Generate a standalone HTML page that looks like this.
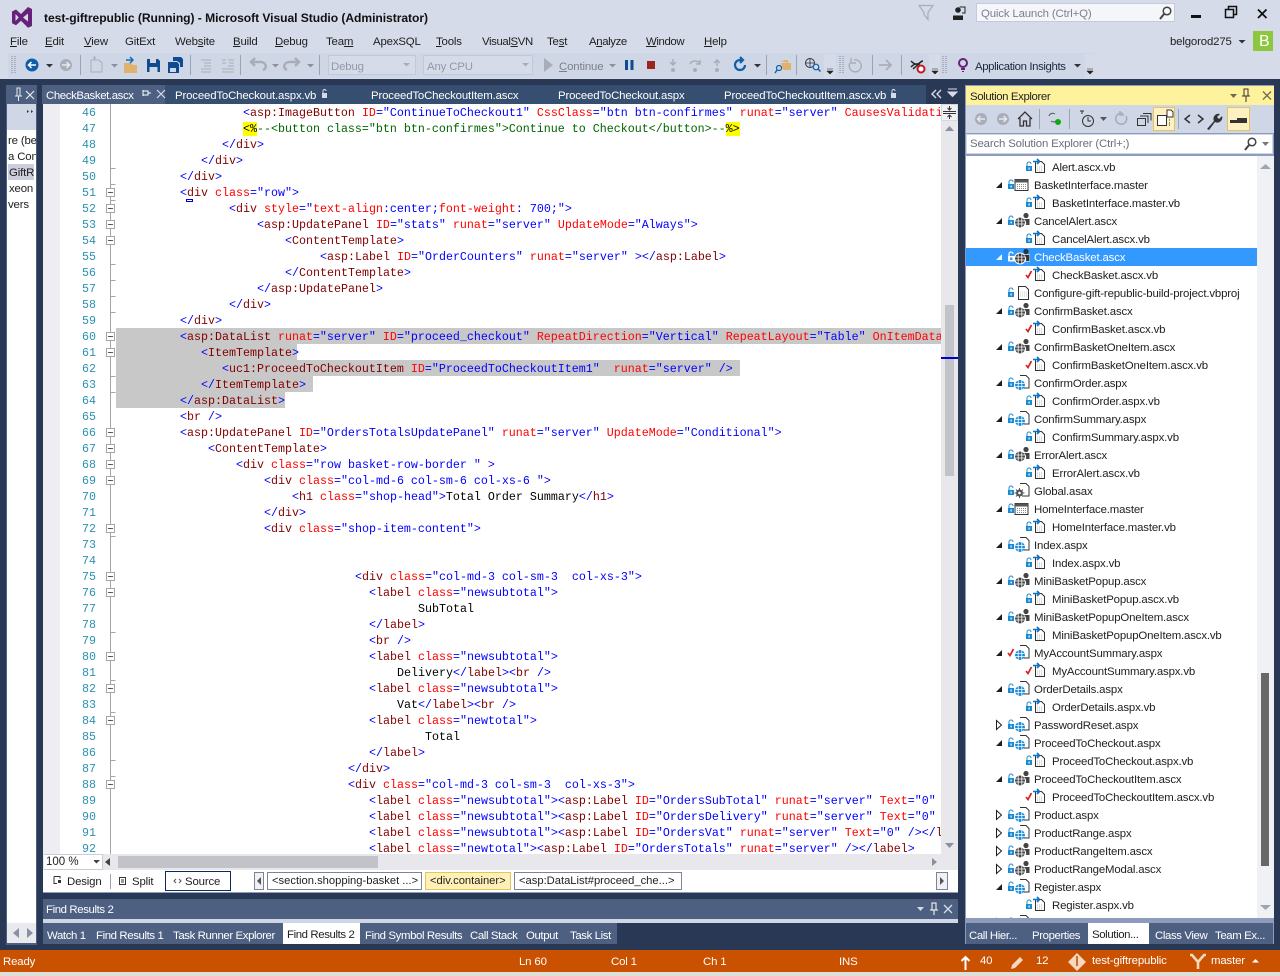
<!DOCTYPE html>
<html><head><meta charset="utf-8"><title>test-giftrepublic - Microsoft Visual Studio</title>
<style>
*{box-sizing:border-box}
html,body{margin:0;padding:0}
body{width:1280px;height:976px;overflow:hidden;position:relative;background:#293955;font:11.4px/16px "Liberation Sans",sans-serif;color:#1e1e1e}
.a{position:absolute}
.t{position:absolute;white-space:nowrap;letter-spacing:-.15px;margin-top:1px}
.n{letter-spacing:-.38px}
.w{color:#fff}
u{text-decoration:underline}
#code{position:absolute;left:43px;top:104px;width:898px;height:750px;background:#fff;overflow:hidden}
#code .l{position:absolute;white-space:pre;margin-top:1px;font:11.667px/16px "Liberation Mono",monospace;color:#000}
#code b{font-weight:normal;color:#800000}
#code i{font-style:normal;color:#0000ff}
#code u{text-decoration:none;color:#ff0000}
#code em{font-style:normal;color:#006400}
#code mark{background:#ffff00;color:#000}
#code .s{position:absolute;left:73px;height:16px;background:#c8c8c8}
#nums{position:absolute;left:17px;top:1px;width:36px;text-align:right;white-space:pre;font:11.667px/16px "Liberation Mono",monospace;color:#2b91af}
#tree{position:absolute;left:966px;top:156px;width:291px;height:762px;overflow:hidden;background:#fff;padding-top:2px}
.r{position:relative;height:18px;color:#1e1e1e}
.r svg{position:absolute;top:0;width:24px;height:18px}
.r span{position:absolute;top:2px;white-space:nowrap;letter-spacing:-.15px}
.sel{background:#3399ff;color:#fff}
.ob{position:absolute;border:1px solid #7a8499;background:#fff;height:18px;top:872px;font:11.2px/16px "Liberation Sans",sans-serif;white-space:nowrap;padding-left:4px;color:#1e1e1e}
</style></head>
<body>
<svg width="0" height="0" style="position:absolute"><defs>
<symbol id="ll" viewBox="0 0 24 18"><path d="M2 8V6a2 2 0 0 1 4 0" fill="none" stroke="#1a8ad4" stroke-width="1"/><rect x="1" y="8" width="6" height="5" fill="#1a8ad4"/><rect x="3.500" y="9.500" width="1.200" height="2" fill="#fff"/></symbol>
<symbol id="ls" viewBox="0 0 24 18"><path d="M2 8V6a2 2 0 0 1 4 0" fill="none" stroke="#fff" stroke-width="1.200"/><rect x="1" y="8" width="6.500" height="5.500" fill="#fff"/><rect x="3" y="9.500" width="2.500" height="2.500" fill="#3399ff"/></symbol>
<symbol id="cc" viewBox="0 0 24 18"><path d="M1 9l2 2.500L6.500 5" fill="none" stroke="#d81e1e" stroke-width="1.700"/></symbol>
<symbol id="ee" viewBox="0 0 24 18"><path d="M1 12h6V6z" fill="#1e1e1e"/></symbol>
<symbol id="es" viewBox="0 0 24 18"><path d="M1 12h6V6z" fill="#eaf4ff"/></symbol>
<symbol id="xx" viewBox="0 0 24 18"><path d="M1.500 4.500v9l5-4.500z" fill="#fff" stroke="#1e1e1e"/></symbol>
<symbol id="ff" viewBox="0 0 24 18"><path d="M2.500 3.500h6l3 3v8h-9z" fill="#fff" stroke="#333"/><path d="M4 9h6M4 11h6M4 13h6" stroke="#bbb" stroke-dasharray="1 1"/><path d="M0 3.500h6M4 1l2.500 2.500L4 6" fill="none" stroke="#0e70c0" stroke-width="1.600"/></symbol>
<symbol id="pg" viewBox="0 0 24 18"><path d="M6 1.500h6l3 3v9.500H10" fill="#fff" stroke="#333"/><circle cx="6" cy="11" r="5" fill="#1a8ad4"/><path d="M1 9.500h10M1 12.500h10M4.200 6v10M7.800 6v10" stroke="#fff" stroke-width=".8"/></symbol>
<symbol id="uc" viewBox="0 0 24 18"><circle cx="6" cy="10.500" r="5" fill="#444"/><path d="M1 9h10M1 12h10M4.200 5.500v10M7.800 5.500v10" stroke="#fff" stroke-width=".8"/><circle cx="12" cy="3.500" r="2.600" fill="#444"/><path d="M10 7h5.500v6H12a6 6 0 0 0-2-6z" fill="#444"/></symbol>
<symbol id="us" viewBox="0 0 24 18"><rect x="9" y="6.500" width="7" height="7" fill="#fff"/><circle cx="6" cy="10.500" r="6" fill="#fff"/><circle cx="6" cy="10.500" r="5" fill="#333"/><path d="M1 9h10M1 12h10M4.200 5.500v10M7.800 5.500v10" stroke="#fff" stroke-width=".8"/><circle cx="12" cy="3.500" r="2.600" fill="#333"/><path d="M10 7h5.500v6H12a6 6 0 0 0-2-6z" fill="#333"/></symbol>
<symbol id="mm" viewBox="0 0 24 18"><rect x="1" y="3.500" width="13" height="11" fill="#fff" stroke="#333"/><rect x="1" y="3.500" width="13" height="3" fill="#555"/><path d="M3 8.500h9.500M3 10.500h9.500M3 12.500h9.500" stroke="#888" stroke-dasharray="1 1"/></symbol>
<symbol id="dc" viewBox="0 0 24 18"><path d="M2.500 2.500h7l3 3v10h-10z" fill="#fff" stroke="#333"/><path d="M4 8h7M4 10h7M4 12h7" stroke="#ccc" stroke-dasharray="1 1"/></symbol>
<symbol id="gl" viewBox="0 0 24 18"><path d="M6 1.500h6l3 3v9.500H9" fill="#fff" stroke="#333"/><circle cx="5.500" cy="11" r="3.500" fill="#555"/><path d="M5.500 6v10M.5 11h10M2 7.500l7 7M9 7.500l-7 7" stroke="#555"/><circle cx="5.500" cy="11" r="1.300" fill="#fff"/></symbol>
<symbol id="fb" viewBox="0 0 9 9"><rect x=".5" y=".5" width="8" height="8" fill="#fff" stroke="#a5a5a5"/><path d="M2 4.500h5" stroke="#555"/></symbol>
</defs></svg>

<!-- top chrome -->
<div class="a" style="left:0;top:0;width:1280px;height:79px;background:#d6dbe9"></div>
<div class="a" style="left:8px;top:53px;width:1087px;height:25px;background:#cfd6e5"></div>
<svg class="a" style="left:0;top:0" width="1280" height="105" viewBox="0 0 1280 105">
<path d="M12 11.500 16 9.500 21 14 28 7 32 9v17l-4 1.800-7-7-5 4.500-4-2zM15.500 14v7l3.200-3.500zM28 13.500l-5 4 5 4z" fill="#68217a" fill-rule="evenodd"/>
<path d="M919 5.500h14l-5 7v7l-4-5v-2z" fill="none" stroke="#a7adba" stroke-width="1.200"/>
<circle cx="958" cy="10" r="2.800" fill="#222"/><path d="M953 20v-4.500h10V20z" fill="#222"/><path d="M959.500 7h5.500v6h-3" fill="none" stroke="#222"/>
<rect x="976.500" y="3.500" width="198" height="18" fill="#f5f6fa" stroke="#c5cbdc"/>
<circle cx="1167" cy="11" r="3.800" fill="none" stroke="#444" stroke-width="1.500"/><path d="M1164 14l-4 5" stroke="#444" stroke-width="2"/>
<rect x="1191" y="15" width="10" height="3" fill="#111"/>
<path d="M1225.500 9.500h8v8h-8zM1228.500 9.500v-3h8v8h-3" fill="none" stroke="#111" stroke-width="1.500"/>
<path d="M1258 9.500l8.500 8.500M1266.500 9.500l-8.500 8.500" stroke="#111" stroke-width="1.800"/>
<path d="M1238.500 40h7l-3.500 3.500z" fill="#333"/>
<rect x="1253" y="31" width="20" height="20" fill="#8dc63f"/>
<path d="M12 56v18M15 56v18" stroke="#8d97ac" stroke-dasharray="1 1" stroke-width="1.200"/>
<circle cx="32" cy="65" r="6.500" fill="#0e5fa8"/><path d="M36 65h-7M31.500 62l-3 3 3 3" fill="none" stroke="#fff" stroke-width="1.500"/>
<path d="M46 64h7l-3.500 3.500z" fill="#333"/>
<circle cx="66" cy="65" r="6" fill="#a8adb8"/><path d="M62 65h7M66.500 62l3 3-3 3" fill="none" stroke="#e8eaf0" stroke-width="1.500"/>
<path d="M80.500 55v20M240.500 55v20M319.500 55v20M190.500 55v20M766.500 55v20M796.500 55v20M872.500 55v20M901.500 55v20" stroke="#9aa3b5"/>
<path d="M91 60h8l3 3v9H91z" fill="none" stroke="#a8adb8"/><path d="M93 58h3M94.500 56v4" stroke="#a8adb8"/>
<path d="M111 64h7l-3.500 3.500z" fill="#8b90a0"/>
<path d="M124 63h7l2 2h4v8h-13z" fill="#dfb36e"/><path d="M126 60h6M130 57l3 3-3 3" fill="none" stroke="#0e70c0" stroke-width="1.500"/>
<path d="M147 59h11l2 2v11h-13z" fill="#0e4b90"/><rect x="150" y="59" width="6" height="4" fill="#cfd6e5"/><rect x="149.500" y="67" width="8" height="5" fill="#cfd6e5"/>
<path d="M168 62h9l2 2v9h-11z" fill="#0e4b90"/><path d="M173 57h8l2 2v8h-3v-4l-3-2h-4z" fill="#0e4b90"/><rect x="170" y="68" width="6" height="4" fill="#cfd6e5"/>
<path d="M201 60h10M204 63h7M204 66h7M201 69h10M201 72h10" stroke="#a8adb8"/>
<path d="M222 60h4M222 63h4M228 60h6M229 63h5M228 66h6M222 69h12M222 72h12" stroke="#a8adb8"/>
<path d="M263 70c5-2 3-9-4-8h-7M255 58l-4 4 4 4" fill="none" stroke="#a8adb8" stroke-width="2.400"/>
<path d="M272 64h7l-3.500 3.500z" fill="#8b90a0"/>
<path d="M287 70c-5-2-3-9 4-8h7M295 58l4 4-4 4" fill="none" stroke="#a8adb8" stroke-width="2.400"/>
<path d="M307 64h7l-3.500 3.500z" fill="#8b90a0"/>
<rect x="328.500" y="55.500" width="87" height="19" fill="#d6dbe9" stroke="#c2c8d7"/><path d="M403 63h7l-3.500 3.500z" fill="#a8adb8"/>
<rect x="423.500" y="55.500" width="109" height="19" fill="#d6dbe9" stroke="#c2c8d7"/><path d="M522 63h7l-3.500 3.500z" fill="#a8adb8"/>
<path d="M544 58v14l9-7z" fill="#a8adb8"/>
<path d="M609 64h7l-3.500 3.500z" fill="#8b90a0"/>
<rect x="625" y="60" width="3" height="10" fill="#0e4b90"/><rect x="630.500" y="60" width="3" height="10" fill="#0e4b90"/>
<rect x="647" y="61" width="8" height="8" fill="#99271b"/>
<path d="M673 59v6M670 62l3 3 3-3" fill="none" stroke="#a8adb8" stroke-width="1.500"/><circle cx="673" cy="70" r="2" fill="#a8adb8"/>
<path d="M690 64c2-4 8-4 10 0M700 60v4h-4" fill="none" stroke="#a8adb8" stroke-width="1.500"/><circle cx="695" cy="70" r="2" fill="#a8adb8"/>
<path d="M717 66v-6M714 63l3-3 3 3" fill="none" stroke="#a8adb8" stroke-width="1.500"/><circle cx="717" cy="70" r="2" fill="#a8adb8"/>
<path d="M745 65a5 5 0 1 1-5-5h3M740 57l3 3-3 3" fill="none" stroke="#0e5fa8" stroke-width="2.200"/>
<path d="M754 64h7l-3.500 3.500z" fill="#333"/>
<path d="M780 61h3l1-1h4v3M781 63h10v7h-8z" fill="#dfb36e"/><circle cx="779" cy="68" r="2.500" fill="none" stroke="#0e5fa8" stroke-width="1.200"/><path d="M777 70l-2 3" stroke="#0e5fa8" stroke-width="1.400"/>
<circle cx="810" cy="63" r="4.500" fill="none" stroke="#333"/><path d="M805.500 63h9M810 58.500v9" stroke="#333" stroke-width=".8"/><circle cx="816" cy="67" r="2.800" fill="#d6dbe9" stroke="#0e5fa8" stroke-width="1.200"/><path d="M818 69l2.500 2.500" stroke="#0e5fa8" stroke-width="1.500"/>
<rect x="824" y="54" width="12" height="24" fill="#d6dbe9"/><path d="M827 69h6M827 71h6l-3 3z" fill="#222" stroke="#222" stroke-width=".6"/>
<path d="M840 56v18M843 56v18" stroke="#8d97ac" stroke-dasharray="1 1" stroke-width="1.200"/>
<path d="M854 60a6 6 0 1 1-4 3M851 58v5h5" fill="none" stroke="#a8adb8" stroke-width="1.400"/>
<path d="M879 65h12M886 60l5 5-5 5" fill="none" stroke="#a8adb8" stroke-width="1.800"/>
<path d="M911 61c3 3 4 3 6 3s4-3 6-3M911 67c3-3 4-3 6-3s4 3 6 3" fill="none" stroke="#222" stroke-width="1.400"/><path d="M913 69l9-8" stroke="#222" stroke-width="1.400"/><circle cx="921" cy="69" r="3.500" fill="#fff" stroke="#c8161d" stroke-width="2"/>
<rect x="929" y="54" width="11" height="24" fill="#d6dbe9"/><path d="M932 69h6M932 71h6l-3 3z" fill="#222" stroke="#222" stroke-width=".6"/>
<path d="M943 56v18M946 56v18" stroke="#8d97ac" stroke-dasharray="1 1" stroke-width="1.200"/>
<circle cx="963" cy="63" r="4" fill="none" stroke="#68217a" stroke-width="2"/><path d="M961 68h4v2h-4zM962 71h2v1h-2z" fill="#68217a"/>
<path d="M1074 64h7l-3.500 3.500z" fill="#333"/>
<rect x="1085" y="54" width="10" height="24" fill="#d6dbe9"/><path d="M1087 69h6M1087 71h6l-3 3z" fill="#222" stroke="#222" stroke-width=".6"/>
</svg>

<div class="t" style="left:44px;top:9px;font-weight:bold;font-size:12.1px;color:#111;letter-spacing:-.05px">test-giftrepublic (Running) - Microsoft Visual Studio (Administrator)</div>
<div class="t" style="left:981px;top:5px;color:#7b8090">Quick Launch (Ctrl+Q)</div>
<div class="t" style="left:1170px;top:33px">belgorod275</div>
<div class="t w" style="left:1259px;top:32px;font-size:16px;line-height:17px;color:#fff">B</div>
<div class="t" style="left:10px;top:33px"><u>F</u>ile</div>
<div class="t" style="left:45px;top:33px"><u>E</u>dit</div>
<div class="t" style="left:84px;top:33px"><u>V</u>iew</div>
<div class="t" style="left:125px;top:33px">GitExt</div>
<div class="t" style="left:175px;top:33px">Web<u>s</u>ite</div>
<div class="t" style="left:233px;top:33px"><u>B</u>uild</div>
<div class="t" style="left:275px;top:33px"><u>D</u>ebug</div>
<div class="t" style="left:326px;top:33px">Tea<u>m</u></div>
<div class="t" style="left:373px;top:33px">ApexSQL</div>
<div class="t" style="left:436px;top:33px"><u>T</u>ools</div>
<div class="t n" style="left:482px;top:33px">Visual<u>S</u>VN</div>
<div class="t" style="left:547px;top:33px">Te<u>s</u>t</div>
<div class="t n" style="left:589px;top:33px">A<u>n</u>alyze</div>
<div class="t n" style="left:646px;top:33px"><u>W</u>indow</div>
<div class="t" style="left:704px;top:33px"><u>H</u>elp</div>
<div class="t" style="left:331px;top:58px;color:#9298a6">Debug</div>
<div class="t" style="left:427px;top:58px;color:#9298a6">Any CPU</div>
<div class="t" style="left:559px;top:58px;color:#7b8090"><u>C</u>ontinue</div>
<div class="t n" style="left:975px;top:58px;color:#1b293e">Application Insights</div>

<!-- left panel -->
<div class="a" style="left:6px;top:85px;width:31px;height:860px;background:#4d6082"></div>
<div class="a" style="left:7px;top:104px;width:29px;height:839px;background:#fff"></div>
<div class="a" style="left:7px;top:104px;width:29px;height:26px;background:#cfd6e5"></div>
<svg class="a" style="left:6px;top:85px" width="31" height="36"><path d="M11 3v8h3v-8zM9 11h7M12.500 11v5" fill="none" stroke="#e8eaf0"/><path d="M20 6l8 8M28 6l-8 8" stroke="#e8eaf0" stroke-width="1.200"/><path d="M21 25v3l2-1.500zM25 25v3l2-1.500z" fill="#333"/></svg>
<div class="a" style="left:8px;top:164px;width:26px;height:16px;background:#cccedb"></div>
<div class="a" style="left:7px;top:132px;width:29px;height:80px;overflow:hidden">
<div class="t" style="left:1px;top:0">re (be</div>
<div class="t" style="left:1px;top:16px">a Con</div>
<div class="t" style="left:2px;top:32px;width:26px;overflow:hidden">GiftR</div>
<div class="t" style="left:2px;top:48px">xeon</div>
<div class="t" style="left:1px;top:64px">vers</div>
</div>
<div class="a" style="left:7px;top:923px;width:29px;height:20px;background:#e8eaf0"></div>
<svg class="a" style="left:7px;top:923px" width="29" height="20"><path d="M12 5v10l-6-5zM20 5v10l6-5z" fill="#8b90a0"/></svg>

<!-- tab strip -->
<div class="a" style="left:43px;top:85px;width:915px;height:19px;background:#364e6f"></div>
<div class="a" style="left:42px;top:85px;width:123px;height:19px;background:#4d6082"></div>
<div class="t w n" style="left:46px;top:87px">CheckBasket.ascx</div>
<div class="t w" style="left:175px;top:87px">ProceedToCheckout.aspx.vb</div>
<div class="t w" style="left:371px;top:87px">ProceedToCheckoutItem.ascx</div>
<div class="t w" style="left:558px;top:87px">ProceedToCheckout.aspx</div>
<div class="t w" style="left:724px;top:87px">ProceedToCheckoutItem.ascx.vb</div>
<svg class="a" style="left:0;top:85px" width="960" height="19" fill="none">
<path d="M143 6h5v4h-5zM148 8h3M143 5v6" stroke="#fff"/><path d="M157 5l8 8M165 5l-8 8" stroke="#d5dbe8" stroke-width="1.200"/>
<rect x="322" y="8" width="5" height="5" fill="#d5dbe8"/><path d="M323 8V6a1.500 1.500 0 0 1 3 0" stroke="#d5dbe8"/>
<rect x="891" y="8" width="5" height="5" fill="#d5dbe8"/><path d="M892 8V6a1.500 1.500 0 0 1 3 0" stroke="#d5dbe8"/>
<rect x="926" y="0" width="32" height="19" fill="#293955"/>
<path d="M936 5l-4 4 4 4M941 5l-4 4 4 4" stroke="#d5dbe8" stroke-width="1.400"/>
<path d="M948 4h9M948 7h9l-4.500 4.500z" fill="#d5dbe8" stroke="#d5dbe8"/>
</svg>

<!-- editor -->
<div id="code">
<div class="a" style="left:0;top:0;width:17px;height:750px;background:#eeeef2"></div>
<div class="s" style="top:224px;width:825px"></div>
<div class="s" style="top:240px;width:181px"></div>
<div class="s" style="top:256px;width:624px"></div>
<div class="s" style="top:272px;width:197px"></div>
<div class="s" style="top:288px;width:169px"></div>
<div id="nums">46
47
48
49
50
51
52
53
54
55
56
57
58
59
60
61
62
63
64
65
66
67
68
69
70
71
72
73
74
75
76
77
78
79
80
81
82
83
84
85
86
87
88
89
90
91
92</div>
<svg class="a" style="left:60px;top:0" width="15" height="750">
<path d="M7.500 0v750" stroke="#a5a5a5"/>
<path d="M7.500 64.500h5M7.500 80.500h5M7.500 96.500h5M7.500 192.500h5M7.500 176.500h5M7.500 208.500h5M7.500 160.500h5M7.500 272.500h5M7.500 288.500h5M7.500 432.500h5M7.500 528.500h5M7.500 576.500h5M7.500 608.500h5M7.500 656.500h5M7.500 672.500h5" stroke="#a5a5a5"/>
<use href="#fb" x="3" y="84" width="9" height="9"/><use href="#fb" x="3" y="100" width="9" height="9"/><use href="#fb" x="3" y="116" width="9" height="9"/><use href="#fb" x="3" y="132" width="9" height="9"/>
<use href="#fb" x="3" y="228" width="9" height="9"/><use href="#fb" x="3" y="244" width="9" height="9"/>
<use href="#fb" x="3" y="324" width="9" height="9"/><use href="#fb" x="3" y="340" width="9" height="9"/><use href="#fb" x="3" y="356" width="9" height="9"/><use href="#fb" x="3" y="372" width="9" height="9"/><use href="#fb" x="3" y="420" width="9" height="9"/>
<use href="#fb" x="3" y="468" width="9" height="9"/><use href="#fb" x="3" y="484" width="9" height="9"/><use href="#fb" x="3" y="548" width="9" height="9"/><use href="#fb" x="3" y="580" width="9" height="9"/><use href="#fb" x="3" y="612" width="9" height="9"/><use href="#fb" x="3" y="676" width="9" height="9"/>
</svg>
<div class="l" style="left:200px;top:0"><i>&lt;</i><b>asp:ImageButton</b> <u>ID</u><i>="ContinueToCheckout1"</i> <u>CssClass</u><i>="btn btn-confirmes"</i> <u>runat</u><i>="server"</i> <u>CausesValidati</u></div>
<div class="l" style="left:200px;top:16px"><mark>&lt;%</mark><em>--&lt;button class="btn btn-confirmes"&gt;Continue to Checkout&lt;/button&gt;--</em><mark>%&gt;</mark></div>
<div class="l" style="left:179px;top:32px"><i>&lt;/</i><b>div</b><i>&gt;</i></div>
<div class="l" style="left:158px;top:48px"><i>&lt;/</i><b>div</b><i>&gt;</i></div>
<div class="l" style="left:137px;top:64px"><i>&lt;/</i><b>div</b><i>&gt;</i></div>
<div class="l" style="left:137px;top:80px"><i>&lt;</i><b>div</b> <u>class</u><i>="row"&gt;</i></div>
<div class="a" style="left:143px;top:95px;width:7px;height:3px;border:1px solid #00c;border-top-width:1px"></div>
<div class="l" style="left:186px;top:96px"><i>&lt;</i><b>div</b> <u>style</u><i>="</i><u>text-align</u><i>:center;</i><u>font-weight</u><i>: 700;"&gt;</i></div>
<div class="l" style="left:214px;top:112px"><i>&lt;</i><b>asp:UpdatePanel</b> <u>ID</u><i>="stats"</i> <u>runat</u><i>="server"</i> <u>UpdateMode</u><i>="Always"&gt;</i></div>
<div class="l" style="left:242px;top:128px"><i>&lt;</i><b>ContentTemplate</b><i>&gt;</i></div>
<div class="l" style="left:277px;top:144px"><i>&lt;</i><b>asp:Label</b> <u>ID</u><i>="OrderCounters"</i> <u>runat</u><i>="server"</i> <i>&gt;&lt;/</i><b>asp:Label</b><i>&gt;</i></div>
<div class="l" style="left:242px;top:160px"><i>&lt;/</i><b>ContentTemplate</b><i>&gt;</i></div>
<div class="l" style="left:214px;top:176px"><i>&lt;/</i><b>asp:UpdatePanel</b><i>&gt;</i></div>
<div class="l" style="left:186px;top:192px"><i>&lt;/</i><b>div</b><i>&gt;</i></div>
<div class="l" style="left:137px;top:208px"><i>&lt;/</i><b>div</b><i>&gt;</i></div>
<div class="l" style="left:137px;top:224px"><i>&lt;</i><b>asp:DataList</b> <u>runat</u><i>="server"</i> <u>ID</u><i>="proceed_checkout"</i> <u>RepeatDirection</u><i>="Vertical"</i> <u>RepeatLayout</u><i>="Table"</i> <u>OnItemData</u></div>
<div class="l" style="left:158px;top:240px"><i>&lt;</i><b>ItemTemplate</b><i>&gt;</i></div>
<div class="l" style="left:179px;top:256px"><i>&lt;</i><b>uc1:ProceedToCheckoutItem</b> <u>ID</u><i>="ProceedToCheckoutItem1"</i>  <u>runat</u><i>="server"</i> <i>/&gt;</i></div>
<div class="l" style="left:158px;top:272px"><i>&lt;/</i><b>ItemTemplate</b><i>&gt;</i></div>
<div class="l" style="left:137px;top:288px"><i>&lt;/</i><b>asp:DataList</b><i>&gt;</i></div>
<div class="l" style="left:137px;top:304px"><i>&lt;</i><b>br</b> <i>/&gt;</i></div>
<div class="l" style="left:137px;top:320px"><i>&lt;</i><b>asp:UpdatePanel</b> <u>ID</u><i>="OrdersTotalsUpdatePanel"</i> <u>runat</u><i>="server"</i> <u>UpdateMode</u><i>="Conditional"&gt;</i></div>
<div class="l" style="left:165px;top:336px"><i>&lt;</i><b>ContentTemplate</b><i>&gt;</i></div>
<div class="l" style="left:193px;top:352px"><i>&lt;</i><b>div</b> <u>class</u><i>="row basket-row-border " &gt;</i></div>
<div class="l" style="left:221px;top:368px"><i>&lt;</i><b>div</b> <u>class</u><i>="col-md-6 col-sm-6 col-xs-6 "&gt;</i></div>
<div class="l" style="left:249px;top:384px"><i>&lt;</i><b>h1</b> <u>class</u><i>="shop-head"&gt;</i>Total Order Summary<i>&lt;/</i><b>h1</b><i>&gt;</i></div>
<div class="l" style="left:221px;top:400px"><i>&lt;/</i><b>div</b><i>&gt;</i></div>
<div class="l" style="left:221px;top:416px"><i>&lt;</i><b>div</b> <u>class</u><i>="shop-item-content"&gt;</i></div>
<div class="l" style="left:312px;top:464px"><i>&lt;</i><b>div</b> <u>class</u><i>="col-md-3 col-sm-3  col-xs-3"&gt;</i></div>
<div class="l" style="left:326px;top:480px"><i>&lt;</i><b>label</b> <u>class</u><i>="newsubtotal"&gt;</i></div>
<div class="l" style="left:375px;top:496px">SubTotal</div>
<div class="l" style="left:326px;top:512px"><i>&lt;/</i><b>label</b><i>&gt;</i></div>
<div class="l" style="left:326px;top:528px"><i>&lt;</i><b>br</b> <i>/&gt;</i></div>
<div class="l" style="left:326px;top:544px"><i>&lt;</i><b>label</b> <u>class</u><i>="newsubtotal"&gt;</i></div>
<div class="l" style="left:354px;top:560px">Delivery<i>&lt;/</i><b>label</b><i>&gt;&lt;</i><b>br</b> <i>/&gt;</i></div>
<div class="l" style="left:326px;top:576px"><i>&lt;</i><b>label</b> <u>class</u><i>="newsubtotal"&gt;</i></div>
<div class="l" style="left:354px;top:592px">Vat<i>&lt;/</i><b>label</b><i>&gt;&lt;</i><b>br</b> <i>/&gt;</i></div>
<div class="l" style="left:326px;top:608px"><i>&lt;</i><b>label</b> <u>class</u><i>="newtotal"&gt;</i></div>
<div class="l" style="left:382px;top:624px">Total</div>
<div class="l" style="left:326px;top:640px"><i>&lt;/</i><b>label</b><i>&gt;</i></div>
<div class="l" style="left:305px;top:656px"><i>&lt;/</i><b>div</b><i>&gt;</i></div>
<div class="l" style="left:305px;top:672px"><i>&lt;</i><b>div</b> <u>class</u><i>="col-md-3 col-sm-3  col-xs-3"&gt;</i></div>
<div class="l" style="left:326px;top:688px"><i>&lt;</i><b>label</b> <u>class</u><i>="newsubtotal"&gt;&lt;</i><b>asp:Label</b> <u>ID</u><i>="OrdersSubTotal"</i> <u>runat</u><i>="server"</i> <u>Text</u><i>="0"</i></div>
<div class="l" style="left:326px;top:704px"><i>&lt;</i><b>label</b> <u>class</u><i>="newsubtotal"&gt;&lt;</i><b>asp:Label</b> <u>ID</u><i>="OrdersDelivery"</i> <u>runat</u><i>="server"</i> <u>Text</u><i>="0"</i></div>
<div class="l" style="left:326px;top:720px"><i>&lt;</i><b>label</b> <u>class</u><i>="newsubtotal"&gt;&lt;</i><b>asp:Label</b> <u>ID</u><i>="OrdersVat"</i> <u>runat</u><i>="server"</i> <u>Text</u><i>="0"</i> <i>/&gt;&lt;/</i><b>l</b></div>
<div class="l" style="left:326px;top:736px"><i>&lt;</i><b>label</b> <u>class</u><i>="newtotal"&gt;&lt;</i><b>asp:Label</b> <u>ID</u><i>="OrdersTotals"</i> <u>runat</u><i>="server"</i> <i>/&gt;&lt;/</i><b>label</b><i>&gt;</i></div>
</div>

<!-- editor scrollbar -->
<div class="a" style="left:941px;top:104px;width:17px;height:750px;background:#e8e8ec"></div>
<div class="a" style="left:945px;top:305px;width:9px;height:171px;background:#c2c3c9"></div>
<div class="a" style="left:941px;top:357px;width:17px;height:2px;background:#0000d0"></div>
<svg class="a" style="left:941px;top:104px" width="17" height="36"><rect x=".5" y=".5" width="16" height="16" fill="#f0f1f5" stroke="#d5d8e0"/><path d="M2 7.500h13M2 9.500h13M8.500 2v3.500M6.500 4l2 2 2-2M8.500 15v-3.500M6.500 13l2-2 2 2" fill="none" stroke="#333"/><path d="M4 27l4.500-5 4.500 5z" fill="#8b90a0"/></svg>
<svg class="a" style="left:941px;top:838px" width="17" height="16"><path d="M4 5l4.500 5 4.500-5z" fill="#8b90a0"/></svg>

<!-- hscroll -->
<div class="a" style="left:43px;top:854px;width:915px;height:16px;background:#e8e8ec"></div>
<div class="a" style="left:44px;top:854px;width:59px;height:16px;background:#fff;border:1px solid #c8ccd8;border-left:0;font-size:11.500px;line-height:14px;padding-left:2px">100 %</div>
<svg class="a" style="left:94px;top:854px" width="24" height="16"><path d="M-1 6h7l-3.500 3.500zM16 4v8l-5-4z" fill="#444"/></svg>
<div class="a" style="left:118px;top:856px;width:260px;height:12px;background:#c2c3c9"></div>
<svg class="a" style="left:930px;top:854px" width="14" height="16"><path d="M2 4l5 4-5 4z" fill="#8b90a0"/></svg>

<!-- design bar -->
<div class="a" style="left:43px;top:870px;width:915px;height:23px;background:#fff;border-bottom:1px solid #8e9bbc"></div>
<svg class="a" style="left:43px;top:870px" width="200" height="23" fill="none"><path d="M11 6.500h6v2M11 6.500v7h3" stroke="#333"/><rect x="15" y="10" width="3" height="3" fill="#333"/><path d="M67.500 4v15" stroke="#9aa3b5"/><rect x="76.500" y="7.500" width="6" height="7" stroke="#333"/><path d="M78 10h3M78 12h3" stroke="#333"/><path d="M133 9l-2 2 2 2M136 9l2 2-2 2" stroke="#555"/></svg>
<div class="t" style="left:67px;top:873px">Design</div>
<div class="t" style="left:132px;top:873px">Split</div>
<div class="a" style="left:165px;top:871px;width:66px;height:20px;border:1px solid #0e2a5c"></div>
<div class="t" style="left:185px;top:873px">Source</div>
<div class="a" style="left:254px;top:872px;width:10px;height:18px;border:1px solid #7a8499;background:#f0f1f5"></div>
<svg class="a" style="left:254px;top:872px" width="10" height="18"><path d="M7 5v8l-4-4z" fill="#555"/></svg>
<div class="ob" style="left:267px;width:155px">&lt;section.shopping-basket ...&gt;</div>
<div class="ob" style="left:425px;width:86px;background:#fff0b5;border-color:#e5c365">&lt;div.container&gt;</div>
<div class="ob" style="left:514px;width:168px">&lt;asp:DataList#proceed_che...&gt;</div>
<div class="a" style="left:936px;top:872px;width:12px;height:18px;border:1px solid #7a8499;background:#f0f1f5"></div>
<svg class="a" style="left:936px;top:872px" width="12" height="18"><path d="M4 5v8l4-4z" fill="#555"/></svg>

<!-- find results -->
<div class="a" style="left:43px;top:899px;width:915px;height:20px;background:#4d6082"></div>
<div class="a" style="left:43px;top:919px;width:915px;height:4px;background:#cfd6e5"></div>
<div class="t w n" style="left:46px;top:901px">Find Results 2</div>
<svg class="a" style="left:915px;top:899px" width="43" height="20"><path d="M2 8h7l-3.500 4z" fill="#d5dbe8"/><path d="M17 4h4v7h-4zM15 11h8M19 11v5" fill="none" stroke="#fff"/><path d="M29 6l8 8M37 6l-8 8" stroke="#d5dbe8" stroke-width="1.300"/></svg>
<div class="a" style="left:43px;top:923px;width:574px;height:21px;background:#4d6082"></div>
<div class="a" style="left:283px;top:923px;width:77px;height:21px;background:#fff"></div>
<div class="t w n" style="left:47px;top:927px">Watch 1</div>
<div class="t w n" style="left:96px;top:927px">Find Results 1</div>
<div class="t w n" style="left:173px;top:927px">Task Runner Explorer</div>
<div class="t n" style="left:287px;top:926px">Find Results 2</div>
<div class="t w n" style="left:365px;top:927px">Find Symbol Results</div>
<div class="t w n" style="left:470px;top:927px">Call Stack</div>
<div class="t w n" style="left:526px;top:927px">Output</div>
<div class="t w n" style="left:570px;top:927px">Task List</div>

<!-- solution explorer -->
<div class="a" style="left:965px;top:85px;width:309px;height:859px;background:#8e9bbc"></div>
<div class="a" style="left:966px;top:86px;width:308px;height:19px;background:#fff29d"></div>
<div class="t n" style="left:970px;top:88px">Solution Explorer</div>
<svg class="a" style="left:1225px;top:86px" width="49" height="19"><path d="M5 8h7l-3.500 4z" fill="#6d6a4c"/><path d="M19 3h4v7h-4zM17 10h8M21 10v6" fill="none" stroke="#333"/><path d="M38 5.500l8 8M46 5.500l-8 8" stroke="#6d6a4c" stroke-width="1.300"/></svg>
<div class="a" style="left:966px;top:105px;width:308px;height:28px;background:#cfd6e5"></div>
<svg class="a" style="left:966px;top:105px" width="308" height="28" fill="none">
<circle cx="15" cy="14" r="6" fill="#a8adb8"/><path d="M19 14h-7M14.500 11l-3 3 3 3" stroke="#e8eaf0" stroke-width="1.400"/>
<circle cx="37" cy="14" r="6" fill="#a8adb8"/><path d="M33 14h7M37.500 11l3 3-3 3" stroke="#e8eaf0" stroke-width="1.400"/>
<path d="M52 14l7-7 7 7M54 13v8h3.500v-5h3v5H64v-8" stroke="#333" stroke-width="1.300"/>
<path d="M73.500 4v20M103.500 4v20M212.500 4v20" stroke="#9aa3b5"/>
<path d="M83 11a4 4 0 0 1 6-2M91 15a4 4 0 0 1-6 1" stroke="#555"/><circle cx="92" cy="17" r="3" fill="#10a810"/>
<path d="M114 6h4M116 6v3" stroke="#333"/><circle cx="122" cy="16" r="5.500" stroke="#333"/><path d="M122 12v4h3" stroke="#333"/>
<path d="M134 12h7l-3.500 4z" fill="#555"/>
<path d="M160 11a5.500 5.500 0 1 1-3-2.500M154 6v4h4" stroke="#a8adb8" stroke-width="1.600"/>
<rect x="171.500" y="13.500" width="8" height="7" stroke="#333"/><path d="M174 11h8v7M177 8.500h8v7" stroke="#333"/>
<rect x="187.500" y="2.500" width="21" height="23" fill="#fff0c0" stroke="#e5c365"/>
<rect x="191.500" y="10.500" width="9" height="10" fill="#fff" stroke="#333"/><path d="M201 5h4l2 2v5h-6z" fill="#fff" stroke="#333"/><path d="M203 15h1M203 18h1M203 20h1" stroke="#333"/>
<path d="M224 10l-5 4 5 4M232 10l5 4-5 4" stroke="#333" stroke-width="1.500"/>
<path d="M241 24l7-8a5 5 0 0 1 6-7l-3 3 2 2 3-3a5 5 0 0 1-7 6l-6 8z" fill="#333"/>
<rect x="261.500" y="2.500" width="22" height="23" fill="#fff0c0" stroke="#e5c365"/><path d="M264 15h17v3h-17z" fill="#333"/><path d="M271 13h10v2h-10z" fill="#333"/>
</svg>
<div class="a" style="left:966px;top:134px;width:307px;height:20px;background:#fff;border:1px solid #cfd6e5"></div>
<div class="t" style="left:970px;top:135px;color:#6b6f7c">Search Solution Explorer (Ctrl+;)</div>
<svg class="a" style="left:1240px;top:134px" width="33" height="20" fill="none"><circle cx="12" cy="8" r="3.800" stroke="#444" stroke-width="1.500"/><path d="M9 11l-4 5" stroke="#444" stroke-width="2"/><path d="M22 8h7l-3.500 4z" fill="#777"/></svg>

<div id="tree">
<div class="r"><svg style="left:59px"><use href="#ll"/></svg><svg style="left:67px"><use href="#ff"/></svg><span style="left:86px">Alert.ascx.vb</span></div>
<div class="r"><svg style="left:29px"><use href="#ee"/></svg><svg style="left:41px"><use href="#ll"/></svg><svg style="left:48px"><use href="#mm"/></svg><span style="left:68px">BasketInterface.master</span></div>
<div class="r"><svg style="left:59px"><use href="#ll"/></svg><svg style="left:67px"><use href="#ff"/></svg><span style="left:86px">BasketInterface.master.vb</span></div>
<div class="r"><svg style="left:29px"><use href="#ee"/></svg><svg style="left:41px"><use href="#ll"/></svg><svg style="left:48px"><use href="#uc"/></svg><span style="left:68px">CancelAlert.ascx</span></div>
<div class="r"><svg style="left:59px"><use href="#ll"/></svg><svg style="left:67px"><use href="#ff"/></svg><span style="left:86px">CancelAlert.ascx.vb</span></div>
<div class="r sel" style="color:#fff"><svg style="left:29px"><use href="#es"/></svg><svg style="left:41px"><use href="#ls"/></svg><svg style="left:48px"><use href="#us"/></svg><span style="left:68px">CheckBasket.ascx</span></div>
<div class="r"><svg style="left:59px"><use href="#cc"/></svg><svg style="left:67px"><use href="#ff"/></svg><span style="left:86px">CheckBasket.ascx.vb</span></div>
<div class="r"><svg style="left:41px"><use href="#ll"/></svg><svg style="left:50px"><use href="#dc"/></svg><span style="left:68px">Configure-gift-republic-build-project.vbproj</span></div>
<div class="r"><svg style="left:29px"><use href="#ee"/></svg><svg style="left:41px"><use href="#ll"/></svg><svg style="left:48px"><use href="#uc"/></svg><span style="left:68px">ConfirmBasket.ascx</span></div>
<div class="r"><svg style="left:59px"><use href="#cc"/></svg><svg style="left:67px"><use href="#ff"/></svg><span style="left:86px">ConfirmBasket.ascx.vb</span></div>
<div class="r"><svg style="left:29px"><use href="#ee"/></svg><svg style="left:41px"><use href="#ll"/></svg><svg style="left:48px"><use href="#uc"/></svg><span style="left:68px">ConfirmBasketOneItem.ascx</span></div>
<div class="r"><svg style="left:59px"><use href="#cc"/></svg><svg style="left:67px"><use href="#ff"/></svg><span style="left:86px">ConfirmBasketOneItem.ascx.vb</span></div>
<div class="r"><svg style="left:29px"><use href="#ee"/></svg><svg style="left:41px"><use href="#ll"/></svg><svg style="left:48px"><use href="#pg"/></svg><span style="left:68px">ConfirmOrder.aspx</span></div>
<div class="r"><svg style="left:59px"><use href="#ll"/></svg><svg style="left:67px"><use href="#ff"/></svg><span style="left:86px">ConfirmOrder.aspx.vb</span></div>
<div class="r"><svg style="left:29px"><use href="#ee"/></svg><svg style="left:41px"><use href="#ll"/></svg><svg style="left:48px"><use href="#pg"/></svg><span style="left:68px">ConfirmSummary.aspx</span></div>
<div class="r"><svg style="left:59px"><use href="#ll"/></svg><svg style="left:67px"><use href="#ff"/></svg><span style="left:86px">ConfirmSummary.aspx.vb</span></div>
<div class="r"><svg style="left:29px"><use href="#ee"/></svg><svg style="left:41px"><use href="#ll"/></svg><svg style="left:48px"><use href="#uc"/></svg><span style="left:68px">ErrorAlert.ascx</span></div>
<div class="r"><svg style="left:59px"><use href="#ll"/></svg><svg style="left:67px"><use href="#ff"/></svg><span style="left:86px">ErrorAlert.ascx.vb</span></div>
<div class="r"><svg style="left:41px"><use href="#ll"/></svg><svg style="left:48px"><use href="#gl"/></svg><span style="left:68px">Global.asax</span></div>
<div class="r"><svg style="left:29px"><use href="#ee"/></svg><svg style="left:41px"><use href="#ll"/></svg><svg style="left:48px"><use href="#mm"/></svg><span style="left:68px">HomeInterface.master</span></div>
<div class="r"><svg style="left:59px"><use href="#ll"/></svg><svg style="left:67px"><use href="#ff"/></svg><span style="left:86px">HomeInterface.master.vb</span></div>
<div class="r"><svg style="left:29px"><use href="#ee"/></svg><svg style="left:41px"><use href="#ll"/></svg><svg style="left:48px"><use href="#pg"/></svg><span style="left:68px">Index.aspx</span></div>
<div class="r"><svg style="left:59px"><use href="#ll"/></svg><svg style="left:67px"><use href="#ff"/></svg><span style="left:86px">Index.aspx.vb</span></div>
<div class="r"><svg style="left:29px"><use href="#ee"/></svg><svg style="left:41px"><use href="#ll"/></svg><svg style="left:48px"><use href="#uc"/></svg><span style="left:68px">MiniBasketPopup.ascx</span></div>
<div class="r"><svg style="left:59px"><use href="#ll"/></svg><svg style="left:67px"><use href="#ff"/></svg><span style="left:86px">MiniBasketPopup.ascx.vb</span></div>
<div class="r"><svg style="left:29px"><use href="#ee"/></svg><svg style="left:41px"><use href="#ll"/></svg><svg style="left:48px"><use href="#uc"/></svg><span style="left:68px">MiniBasketPopupOneItem.ascx</span></div>
<div class="r"><svg style="left:59px"><use href="#ll"/></svg><svg style="left:67px"><use href="#ff"/></svg><span style="left:86px">MiniBasketPopupOneItem.ascx.vb</span></div>
<div class="r"><svg style="left:29px"><use href="#ee"/></svg><svg style="left:41px"><use href="#cc"/></svg><svg style="left:48px"><use href="#pg"/></svg><span style="left:68px">MyAccountSummary.aspx</span></div>
<div class="r"><svg style="left:59px"><use href="#cc"/></svg><svg style="left:67px"><use href="#ff"/></svg><span style="left:86px">MyAccountSummary.aspx.vb</span></div>
<div class="r"><svg style="left:29px"><use href="#ee"/></svg><svg style="left:41px"><use href="#ll"/></svg><svg style="left:48px"><use href="#pg"/></svg><span style="left:68px">OrderDetails.aspx</span></div>
<div class="r"><svg style="left:59px"><use href="#ll"/></svg><svg style="left:67px"><use href="#ff"/></svg><span style="left:86px">OrderDetails.aspx.vb</span></div>
<div class="r"><svg style="left:29px"><use href="#xx"/></svg><svg style="left:41px"><use href="#ll"/></svg><svg style="left:48px"><use href="#pg"/></svg><span style="left:68px">PasswordReset.aspx</span></div>
<div class="r"><svg style="left:29px"><use href="#ee"/></svg><svg style="left:41px"><use href="#ll"/></svg><svg style="left:48px"><use href="#pg"/></svg><span style="left:68px">ProceedToCheckout.aspx</span></div>
<div class="r"><svg style="left:59px"><use href="#ll"/></svg><svg style="left:67px"><use href="#ff"/></svg><span style="left:86px">ProceedToCheckout.aspx.vb</span></div>
<div class="r"><svg style="left:29px"><use href="#ee"/></svg><svg style="left:41px"><use href="#ll"/></svg><svg style="left:48px"><use href="#uc"/></svg><span style="left:68px">ProceedToCheckoutItem.ascx</span></div>
<div class="r"><svg style="left:59px"><use href="#cc"/></svg><svg style="left:67px"><use href="#ff"/></svg><span style="left:86px">ProceedToCheckoutItem.ascx.vb</span></div>
<div class="r"><svg style="left:29px"><use href="#xx"/></svg><svg style="left:41px"><use href="#ll"/></svg><svg style="left:48px"><use href="#pg"/></svg><span style="left:68px">Product.aspx</span></div>
<div class="r"><svg style="left:29px"><use href="#xx"/></svg><svg style="left:41px"><use href="#ll"/></svg><svg style="left:48px"><use href="#pg"/></svg><span style="left:68px">ProductRange.aspx</span></div>
<div class="r"><svg style="left:29px"><use href="#xx"/></svg><svg style="left:41px"><use href="#ll"/></svg><svg style="left:48px"><use href="#uc"/></svg><span style="left:68px">ProductRangeItem.ascx</span></div>
<div class="r"><svg style="left:29px"><use href="#xx"/></svg><svg style="left:41px"><use href="#ll"/></svg><svg style="left:48px"><use href="#uc"/></svg><span style="left:68px">ProductRangeModal.ascx</span></div>
<div class="r"><svg style="left:29px"><use href="#ee"/></svg><svg style="left:41px"><use href="#ll"/></svg><svg style="left:48px"><use href="#pg"/></svg><span style="left:68px">Register.aspx</span></div>
<div class="r"><svg style="left:59px"><use href="#ll"/></svg><svg style="left:67px"><use href="#ff"/></svg><span style="left:86px">Register.aspx.vb</span></div>
<div class="r"><svg style="left:29px"><use href="#xx"/></svg><svg style="left:41px"><use href="#ll"/></svg><svg style="left:48px"><use href="#pg"/></svg><span style="left:68px">SearchProductResults.aspx</span></div>
</div>
<div class="a" style="left:1257px;top:156px;width:17px;height:762px;background:#f0f1f5"></div>
<div class="a" style="left:1261px;top:673px;width:8px;height:193px;background:#686868"></div>
<svg class="a" style="left:1257px;top:156px" width="17" height="762"><path d="M3 13l5.500-5 5.500 5zM3 749l5.500 5 5.500-5z" fill="#a0a5b2"/></svg>
<div class="a" style="left:966px;top:923px;width:307px;height:21px;background:#4d6082"></div>
<div class="a" style="left:1088px;top:923px;width:61px;height:21px;background:#fff"></div>
<div class="t w n" style="left:969px;top:927px">Call Hier...</div>
<div class="t w n" style="left:1032px;top:927px">Properties</div>
<div class="t n" style="left:1092px;top:926px">Solution...</div>
<div class="t w n" style="left:1155px;top:927px">Class View</div>
<div class="t w n" style="left:1215px;top:927px">Team Ex...</div>

<!-- status bar -->
<div class="a" style="left:0;top:950px;width:1280px;height:22px;background:#ca5100"></div>
<div class="a" style="left:0;top:972px;width:1280px;height:4px;background:#dedfd8"></div>
<div class="t w" style="left:3px;top:953px">Ready</div>
<div class="t w" style="left:519px;top:953px">Ln 60</div>
<div class="t w" style="left:611px;top:953px">Col 1</div>
<div class="t w" style="left:703px;top:953px">Ch 1</div>
<div class="t w" style="left:839px;top:953px">INS</div>
<div class="t w" style="left:980px;top:952px">40</div>
<div class="t w" style="left:1036px;top:952px">12</div>
<div class="t w" style="left:1092px;top:952px">test-giftrepublic</div>
<div class="t w" style="left:1211px;top:952px">master</div>
<svg class="a" style="left:960px;top:950px" width="320" height="22" fill="none">
<path d="M5.500 20v-12M1.500 11l4-4 4 4" stroke="#fff" stroke-width="2"/>
<path d="M60 7l3 3-8 8-4 1 1-4z" fill="#f4d8c0"/>
<path d="M117 3l9 9-9 9-9-9z" fill="#f4d8c0"/><path d="M117 6v10" stroke="#ca5100" stroke-width="1.600"/>
<path d="M230 5l2 0 6 7 6-7 2 0M238 12v7" stroke="#f4d8c0" stroke-width="2.600"/>
<path d="M292 12.500h7l-3.500-3.500z" fill="#fff"/>
</svg>
</body></html>
